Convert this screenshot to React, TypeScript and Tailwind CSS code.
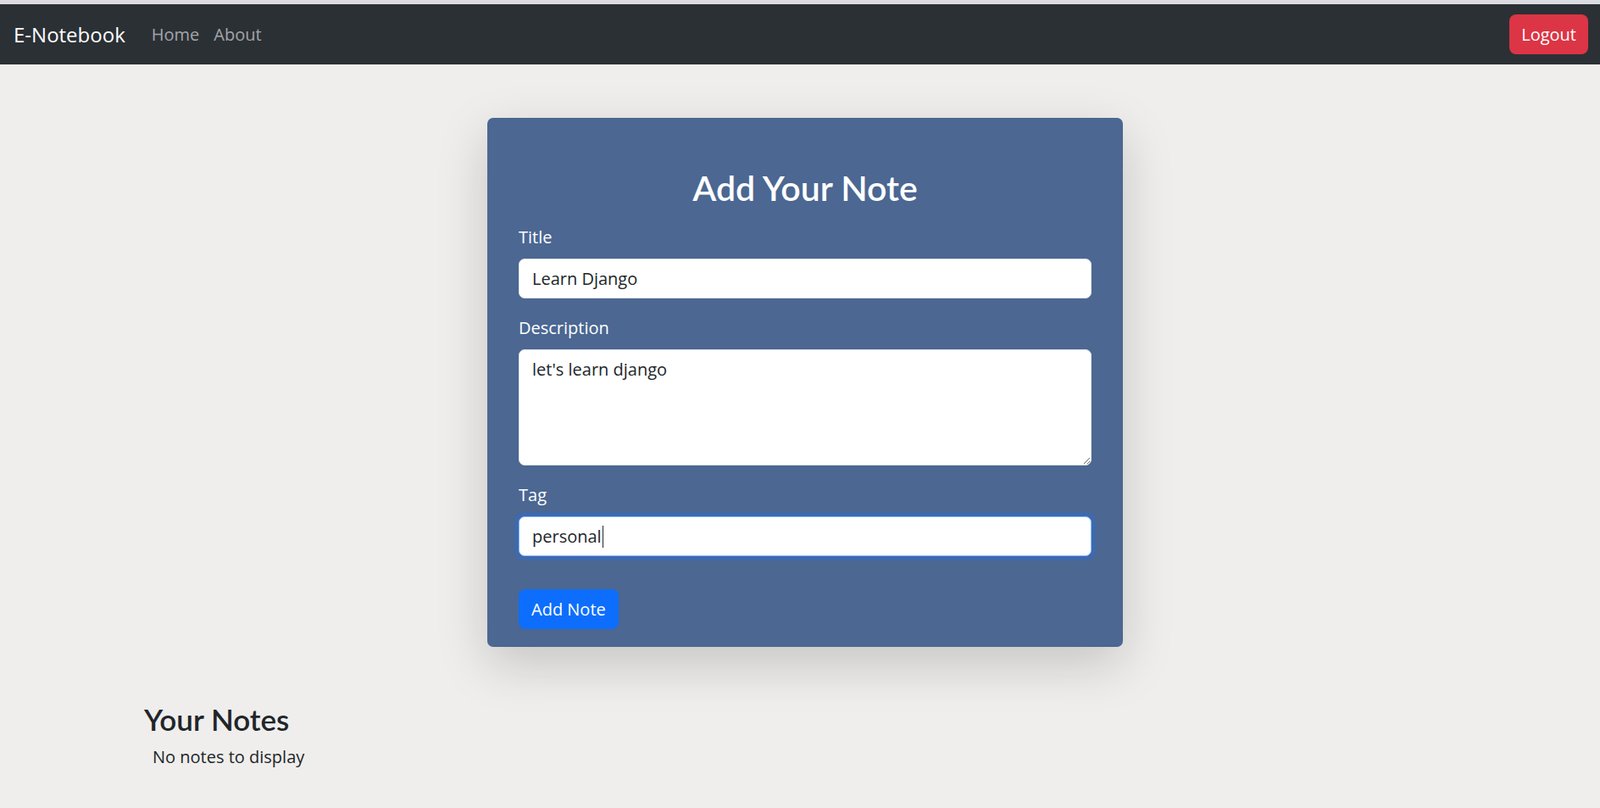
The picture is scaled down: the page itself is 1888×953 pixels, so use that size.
import React from 'react';

const font = { fontFamily: '"Open Sans", "Noto Sans", sans-serif' };
const headFont = { fontFamily: 'Lato, "Open Sans", sans-serif' };

function Navbar() {
  return (
    <nav className="flex h-[71px] items-center bg-[#2b3035] pl-[16px] pr-[14px]">
      <a className="text-[24px] leading-[38px] text-white">E-Notebook</a>
      <div className="ml-[31px] flex items-center gap-[17px] text-[20px] text-[#a3a5a8]">
        <a>Home</a>
        <a>About</a>
      </div>
      <button className="ml-auto h-[47px] rounded-[8px] bg-[#dc3545] px-[14px] text-[20px] text-white">
        Logout
      </button>
    </nav>
  );
}

function Field({ label, children }: { label: string; children: React.ReactNode }) {
  return (
    <div className="mb-[20px]">
      <label className="mb-[10px] block text-[20px] leading-[30px] text-white">{label}</label>
      {children}
    </div>
  );
}

export default function App() {
  return (
    <div style={font} className="min-h-screen bg-[#efeeec]">
      <div className="h-[5px] bg-[#dadce0]" />
      <Navbar />

      <main className="pl-[12px] pt-[63px]">
        <div className="mx-auto w-[750px] rounded-[7px] bg-[#4b6792] px-[37px] pb-[21px] pt-[59px] shadow-[0_20px_60px_rgba(0,0,0,0.175)]">
          <h2 style={headFont} className="mb-[19px] text-center text-[41px] font-semibold leading-[48px] text-white">
            Add Your Note
          </h2>
          <Field label="Title">
            <input
              defaultValue="Learn Django"
              className="block h-[47px] w-full rounded-[7px] border border-[#dee2e6] bg-white px-[15px] text-[20px] text-[#212529] outline-none"
            />
          </Field>
          <Field label="Description">
            <textarea
              defaultValue="let's learn django"
              className="block h-[137px] w-full rounded-[7px] border border-[#dee2e6] bg-white px-[15px] py-[8px] text-[20px] leading-[30px] text-[#212529] outline-none"
            />
          </Field>
          <Field label="Tag">
            <div className="flex h-[47px] w-full items-center rounded-[7px] border border-[#86b7fe] bg-white px-[15px] text-[20px] text-[#212529] shadow-[0_0_0_5px_#3e6aad]">
              <span>personal</span>
              <span className="ml-[1px] h-[26px] w-px bg-[#212529]" />
            </div>
          </Field>
          <button className="mt-[19px] h-[47px] rounded-[8px] bg-[#0d6efd] px-[15px] text-[20px] text-white">
            Add Note
          </button>
        </div>

        <div className="ml-[158px] mt-[64px]">
          <h3 style={headFont} className="text-[35px] font-semibold leading-[42px] text-[#212529]">Your Notes</h3>
          <p className="ml-[10px] mt-[9px] text-[20px] leading-[30px] text-[#212529]">No notes to display</p>
        </div>
      </main>
    </div>
  );
}
